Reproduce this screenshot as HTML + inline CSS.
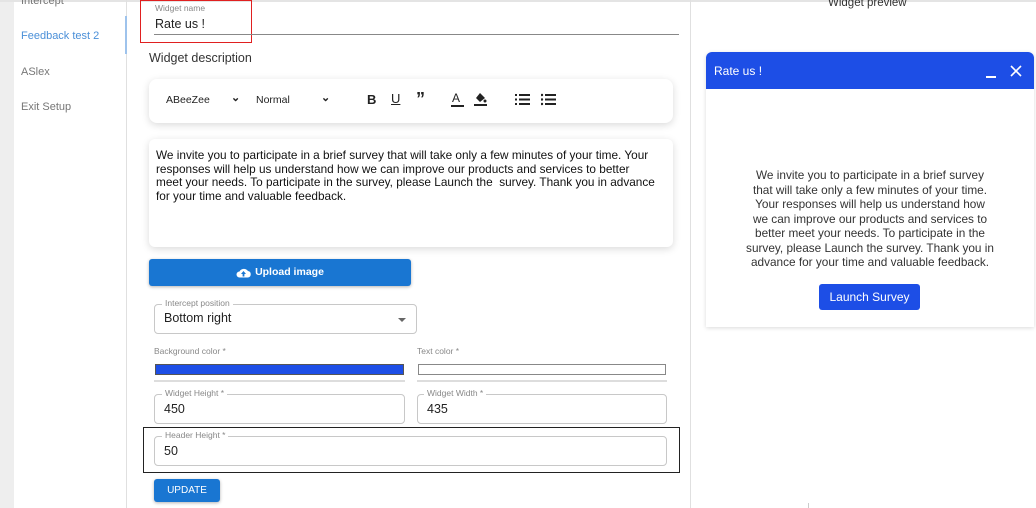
<!DOCTYPE html>
<html><head><style>
*{box-sizing:border-box;margin:0;padding:0}
body{width:1036px;height:508px;overflow:hidden;background:#fff;font-family:"Liberation Sans",sans-serif;position:relative;color:#222}
.a{position:absolute}
.side{font-size:11px;color:#777}
.ol{position:absolute;border:1px solid #c8c8c8;border-radius:4px}
.lg{position:absolute;font-size:8.5px;color:#888;background:#fff;padding:0 3px}
.val{position:absolute;font-size:12.5px;color:#222}
</style></head><body>
<div class="a" style="left:0;top:0;width:14px;height:508px;background:#eeeeee"></div>
<div class="a" style="left:0;top:0;width:1036px;height:2px;background:#e4e4e4"></div>
<div class="a" style="left:126px;top:0;width:1px;height:508px;background:#e0e0e0"></div>
<div class="a" style="left:125px;top:16px;width:2px;height:38px;background:#9ec3ec"></div>
<div class="a" style="left:690px;top:0;width:1px;height:508px;background:#e0e0e0"></div>
<div class="a side" style="left:21px;top:-5px">Intercept</div>
<div class="a side" style="left:21px;top:30px;color:#4a8fd8">Feedback test 2</div>
<div class="a side" style="left:21px;top:66px">ASlex</div>
<div class="a side" style="left:21px;top:101px">Exit Setup</div>

<div class="a" style="left:140px;top:0;width:112px;height:43px;border:1px solid #e02020"></div>
<div class="a" style="left:155px;top:3px;font-size:8.5px;color:#888">Widget name</div>
<div class="a" style="left:155px;top:17px;font-size:12.5px">Rate us !</div>
<div class="a" style="left:154px;top:34px;width:525px;height:1px;background:#888"></div>
<div class="a" style="left:149px;top:51px;font-size:12.5px;color:#333">Widget description</div>

<div class="a" style="left:149px;top:79px;width:524px;height:44px;border-radius:8px;background:#fff;box-shadow:0 2px 8px rgba(0,0,0,.15)"></div>
<div class="a" style="left:166px;top:94px;font-size:10.5px;color:#222">ABeeZee</div>
<div class="a" style="left:231px;top:91px;font-size:11px;font-weight:bold">⌄</div>
<div class="a" style="left:256px;top:94px;font-size:10.5px;color:#222">Normal</div>
<div class="a" style="left:321px;top:91px;font-size:11px;font-weight:bold">⌄</div>
<div class="a" style="left:367px;top:92px;font-size:13px;font-weight:bold">B</div>
<div class="a" style="left:391px;top:91px;font-size:13px;text-decoration:underline">U</div>
<div class="a" style="left:416px;top:89px;font-size:18px;font-weight:bold">”</div>
<div class="a" style="left:452px;top:91px;font-size:12px">A</div>
<div class="a" style="left:451px;top:105px;width:13px;height:2px;background:#222"></div>
<svg class="a" style="left:473px;top:91px" width="14" height="16"><path d="M3 7 L7 2 L12 7 L7 11 Z" fill="#222"/><circle cx="12" cy="10" r="1.5" fill="#222"/><rect x="1" y="13" width="13" height="2" fill="#222"/></svg>
<svg class="a" style="left:515px;top:93px" width="16" height="13"><g fill="#222"><rect x="4" y="1" width="11" height="2"/><rect x="4" y="5.5" width="11" height="2"/><rect x="4" y="10" width="11" height="2"/><rect x="0" y="1" width="2" height="2"/><rect x="0" y="5.5" width="2" height="2"/><rect x="0" y="10" width="2" height="2"/></g></svg>
<svg class="a" style="left:541px;top:93px" width="16" height="13"><g fill="#222"><rect x="4" y="1" width="11" height="2"/><rect x="4" y="5.5" width="11" height="2"/><rect x="4" y="10" width="11" height="2"/><circle cx="1" cy="2" r="1.2"/><circle cx="1" cy="6.5" r="1.2"/><circle cx="1" cy="11" r="1.2"/></g></svg>

<div class="a" style="left:149px;top:139px;width:524px;height:108px;border-radius:6px;background:#fff;box-shadow:0 2px 8px rgba(0,0,0,.15)"></div>
<div class="a" style="left:156px;top:149px;white-space:nowrap;font-size:11.8px;line-height:13.5px;color:#111">We invite you to participate in a brief survey that will take only a few minutes of your time. Your<br>responses will help us understand how we can improve our products and services to better<br>meet your needs. To participate in the survey, please Launch the&nbsp; survey. Thank you in advance<br>for your time and valuable feedback.</div>

<div class="a" style="left:149px;top:259px;width:262px;height:27px;background:#1976d2;border-radius:3px;box-shadow:0 1px 3px rgba(0,0,0,.3);color:#fff;font-size:10.5px;font-weight:bold;text-align:center;line-height:27px">
<svg style="vertical-align:middle;margin-right:4px" width="15" height="11"><path d="M3.5 10.5 A3 3 0 0 1 3.5 4.5 A5 5 0 0 1 12 4 A3.3 3.3 0 0 1 12 10.5 Z" fill="#fff"/><path d="M7.5 4 L10 7 L8.4 7 L8.4 9.5 L6.6 9.5 L6.6 7 L5 7 Z" fill="#1976d2"/></svg>Upload image</div>

<div class="ol" style="left:154px;top:304px;width:263px;height:30px"></div>
<div class="lg" style="left:162px;top:298px">Intercept position</div>
<div class="val" style="left:164px;top:311px">Bottom right</div>
<div class="a" style="left:398px;top:318px;border-left:4px solid transparent;border-right:4px solid transparent;border-top:4px solid #666"></div>

<div class="a" style="left:154px;top:346px;font-size:8.5px;color:#888">Background color *</div>
<div class="a" style="left:417px;top:346px;font-size:8.5px;color:#888">Text color *</div>
<div class="a" style="left:155px;top:364px;width:249px;height:11px;background:#1d4ee6;border:1px solid #555"></div>
<div class="a" style="left:418px;top:364px;width:248px;height:11px;background:#fff;border:1px solid #888"></div>
<div class="a" style="left:154px;top:380px;width:251px;height:2px;background:#ddd"></div>
<div class="a" style="left:417px;top:380px;width:250px;height:2px;background:#ddd"></div>

<div class="ol" style="left:154px;top:394px;width:251px;height:30px"></div>
<div class="lg" style="left:162px;top:388px">Widget Height *</div>
<div class="val" style="left:164px;top:402px">450</div>
<div class="ol" style="left:417px;top:394px;width:250px;height:30px"></div>
<div class="lg" style="left:424px;top:388px">Widget Width *</div>
<div class="val" style="left:427px;top:402px">435</div>

<div class="a" style="left:143px;top:427px;width:537px;height:46px;border:1px solid #222"></div>
<div class="ol" style="left:154px;top:436px;width:513px;height:30px"></div>
<div class="lg" style="left:162px;top:430px">Header Height *</div>
<div class="val" style="left:164px;top:444px">50</div>

<div class="a" style="left:154px;top:479px;width:66px;height:23px;background:#1976d2;border-radius:3px;box-shadow:0 1px 3px rgba(0,0,0,.3);color:#fff;font-size:10px;text-align:center;line-height:23px">UPDATE</div>

<div class="a" style="left:828px;top:-3px;font-size:11.5px;color:#333">Widget preview</div>
<div class="a" style="left:706px;top:52px;width:328px;height:275px;border-radius:6px 6px 0 0;background:#fff;box-shadow:0 1px 4px rgba(0,0,0,.15)"></div>
<div class="a" style="left:706px;top:52px;width:328px;height:37px;background:#1d4ee6;border-radius:6px 6px 0 0"></div>
<div class="a" style="left:714px;top:64px;font-size:12px;color:#fff">Rate us !</div>
<div class="a" style="left:986px;top:76px;width:10px;height:2px;background:#fff"></div>
<svg class="a" style="left:1010px;top:65px" width="12" height="12"><path d="M1 1 L11 11 M11 1 L1 11" stroke="#fff" stroke-width="1.6"/></svg>
<div class="a" style="left:720px;top:168px;width:300px;text-align:center;white-space:nowrap;font-size:11.8px;line-height:14.5px;color:#333">We invite you to participate in a brief survey<br>that will take only a few minutes of your time.<br>Your responses will help us understand how<br>we can improve our products and services to<br>better meet your needs. To participate in the<br>survey, please Launch the survey. Thank you in<br>advance for your time and valuable feedback.</div>
<div class="a" style="left:819px;top:284px;width:101px;height:26px;background:#1d4ee6;border-radius:3px;color:#fff;font-size:12px;text-align:center;line-height:26px">Launch Survey</div>
<div class="a" style="left:808px;top:503px;width:1px;height:5px;background:#ccc"></div>
</body></html>
